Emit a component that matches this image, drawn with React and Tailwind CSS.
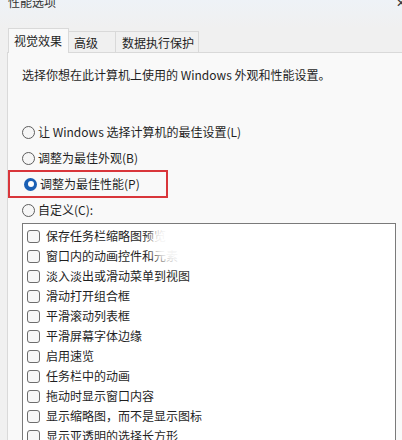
import React from 'react';

const radios = [
  { label: '让 Windows 选择计算机的最佳设置(L)' },
  { label: '调整为最佳外观(B)' },
  { label: '调整为最佳性能(P)', checked: true, boxed: true },
  { label: '自定义(C):' },
];

const effects = [
  '保存任务栏缩略图预览',
  '窗口内的动画控件和元素',
  '淡入淡出或滑动菜单到视图',
  '滑动打开组合框',
  '平滑滚动列表框',
  '平滑屏幕字体边缘',
  '启用速览',
  '任务栏中的动画',
  '拖动时显示窗口内容',
  '显示缩略图，而不是显示图标',
  '显示亚透明的选择长方形',
];

function Radio({ checked }) {
  if (checked) {
    return (
      <span className="w-[13px] h-[13px] rounded-full bg-[#1a5fb4] flex items-center justify-center shrink-0">
        <span className="w-[6px] h-[6px] rounded-full bg-white" />
      </span>
    );
  }
  return <span className="w-[13px] h-[13px] rounded-full border border-[#5d5d5d] bg-[#f6f6f6] shrink-0" />;
}

export default function App() {
  return (
    <div className="w-[402px] h-[440px] overflow-hidden bg-[#f0f0f0] text-[12px] text-[#1f1f1f] font-['Noto_Sans_CJK_SC','Noto_Sans',sans-serif]">
      {/* title bar, cut off at the top */}
      <div className="h-[28px] bg-gradient-to-b from-[#eef2f7] to-[#f0f0f0] flex justify-between pl-[8px]">
        <span className="-mt-[7px] text-[12px] leading-[18px] text-[#333]">性能选项</span>
        <span className="-mt-[7px] -mr-[4px] text-[12px] leading-[18px] text-[#333]">✕</span>
      </div>

      {/* tabs */}
      <div className="flex items-end pl-[8px] h-[25px] relative z-10">
        <div className="h-[25px] w-[61px] pl-[5px] flex items-center bg-[#f9f9f9] border border-b-0 border-[#d9d9d9]">视觉效果</div>
        <div className="h-[22px] w-[47px] pl-[5px] flex items-center border-t border-r border-[#d9d9d9]">高级</div>
        <div className="h-[22px] w-[83px] pl-[6px] flex items-center border-t border-r border-[#d9d9d9]">数据执行保护</div>
      </div>

      {/* panel */}
      <div className="ml-[7px] -mt-px h-[400px] bg-[#f9f9f9] border-l border-t border-[#d9d9d9] pl-[14px]">
        <p className="pt-[13px] leading-[18px]">选择你想在此计算机上使用的 Windows 外观和性能设置。</p>

        <div className="mt-[35px] flex flex-col -ml-[14px]">
          {radios.map((r) => (
            <div key={r.label} className="h-[26px] flex items-center pl-[14px]">
              <div
                className={
                  r.boxed
                    ? 'h-[28px] w-[160px] -ml-[14px] pl-[14px] flex items-center gap-[3px] border-2 border-[#d9363b]'
                    : 'flex items-center gap-[3px]'
                }
              >
                <Radio checked={r.checked} />
                <span className="leading-[18px]">{r.label}</span>
              </div>
            </div>
          ))}
        </div>

        <div className="w-[374px] h-[300px] bg-white border border-[#7a7a7a] pt-[2px] relative overflow-hidden">
          {effects.map((e) => (
            <div key={e} className="h-[20px] flex items-center pl-[4px] gap-[6px]">
              <span className="w-[13px] h-[13px] rounded-[3px] border border-[#6d6d6d] bg-[#f7f7f7] shrink-0" />
              <span className="leading-[18px]">{e}</span>
            </div>
          ))}
          {/* washed-out smear over the first rows */}
          <div className="absolute left-[128px] top-[-8px] w-[170px] h-[50px] rounded-full bg-white/95 blur-[4px]" />
        </div>
      </div>
    </div>
  );
}
